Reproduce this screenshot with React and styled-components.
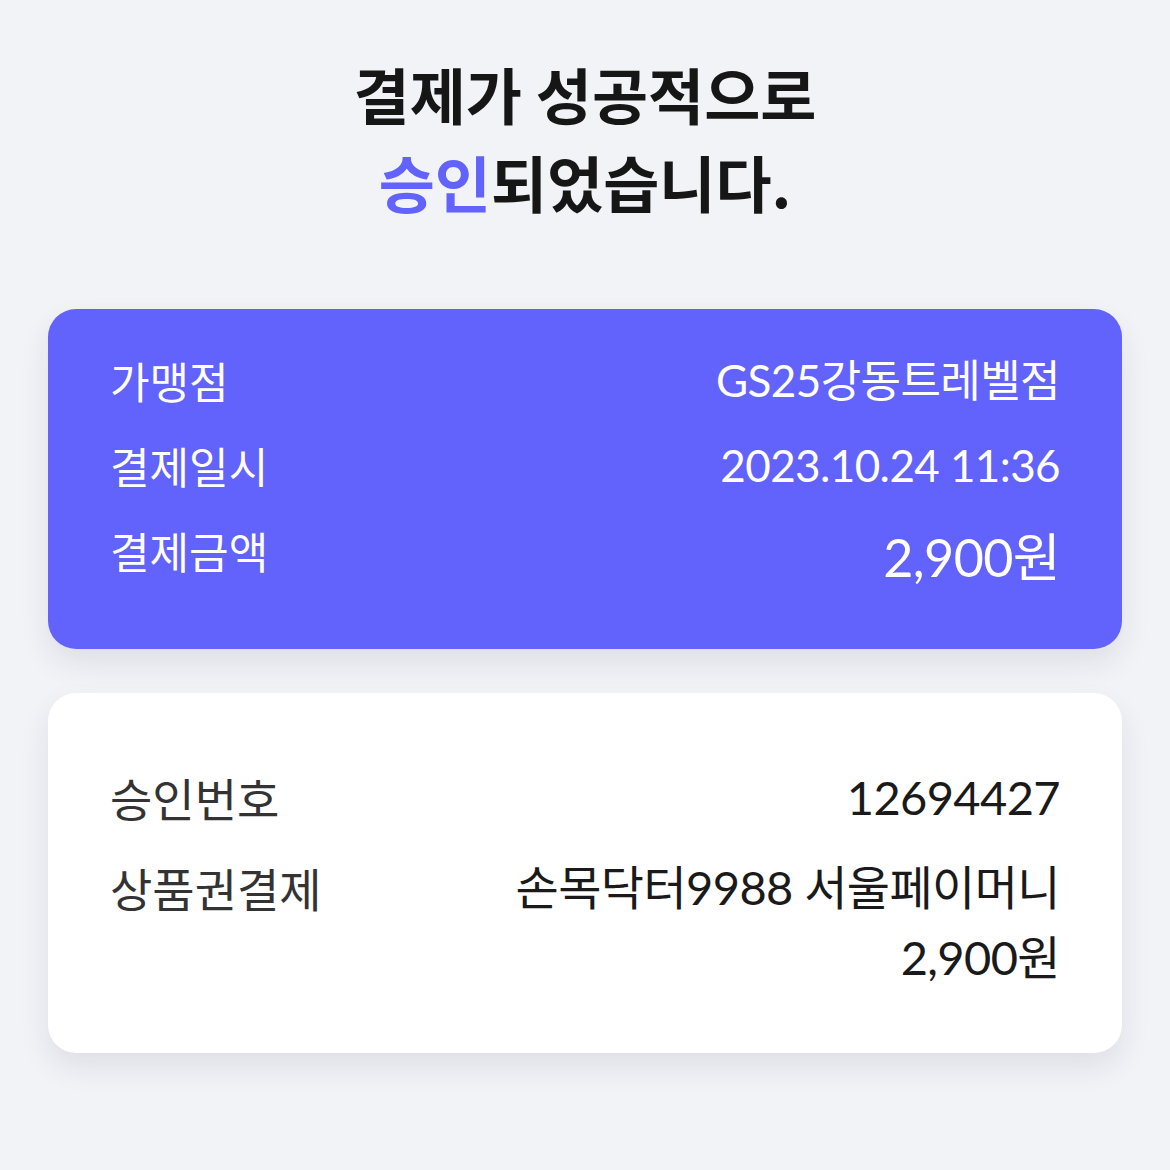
import React from "react";
import styled, { createGlobalStyle } from "styled-components";

const GlobalStyle = createGlobalStyle`
  body {
    margin: 0;
    background: #f2f3f7;
    font-family: Lato, "Noto Sans CJK KR", sans-serif;
  }
`;

const Page = styled.div`
  padding: 50px 48px 80px;
  display: flex;
  flex-direction: column;
  gap: 44px;
`;

const Title = styled.h1`
  margin: 0 0 39px;
  text-align: center;
  font-family: "Noto Sans CJK KR", sans-serif;
  font-size: 61px;
  line-height: 88px;
  font-weight: 700;
  color: #161616;
`;

const Accent = styled.span`
  color: #6262fd;
`;

const Card = styled.section`
  border-radius: 28px;
  background: ${(p) => (p.$primary ? "#6262fd" : "#ffffff")};
  color: ${(p) => (p.$primary ? "#ffffff" : "#1a1a1a")};
  box-shadow: 0 14px 30px rgba(30, 34, 60, 0.09);
  padding: ${(p) => p.$pad};
  display: flex;
  flex-direction: column;
  gap: ${(p) => p.$gap};
`;

const Row = styled.div`
  display: flex;
  justify-content: space-between;
  align-items: ${(p) => p.$align || "center"};
`;

const Label = styled.span`
  font-family: "Noto Sans CJK KR", sans-serif;
  font-size: ${(p) => p.$size};
  line-height: ${(p) => p.$lh};
  color: ${(p) => p.$color || "inherit"};
`;

const Value = styled.span`
  font-size: ${(p) => p.$size};
  line-height: ${(p) => p.$lh};
  text-align: right;
  letter-spacing: -0.6px;
`;

export default function App() {
  return (
    <>
      <GlobalStyle />
      <Page>
        <Title>
          결제가 성공적으로
          <br />
          <Accent>승인</Accent>되었습니다.
        </Title>

        <Card $primary $pad="43px 62px 57px" $gap="29px">
          <Row>
            <Label $size="43px" $lh="56px">가맹점</Label>
            <Value $size="44px" $lh="56px">GS25강동트레벨점</Value>
          </Row>
          <Row>
            <Label $size="43px" $lh="56px">결제일시</Label>
            <Value $size="44px" $lh="56px">2023.10.24 11:36</Value>
          </Row>
          <Row $align="flex-start">
            <Label $size="43px" $lh="56px">결제금액</Label>
            <Value $size="52px" $lh="70px">2,900원</Value>
          </Row>
        </Card>

        <Card $pad="69px 62px 61px" $gap="20px">
          <Row $align="flex-start">
            <Label $size="46px" $lh="70px" $color="#333333">승인번호</Label>
            <Value $size="47px" $lh="70px">12694427</Value>
          </Row>
          <Row $align="flex-start">
            <Label $size="46px" $lh="70px" $color="#333333">상품권결제</Label>
            <Value $size="47px" $lh="70px">
              손목닥터9988 서울페이머니
              <br />
              2,900원
            </Value>
          </Row>
        </Card>
      </Page>
    </>
  );
}
